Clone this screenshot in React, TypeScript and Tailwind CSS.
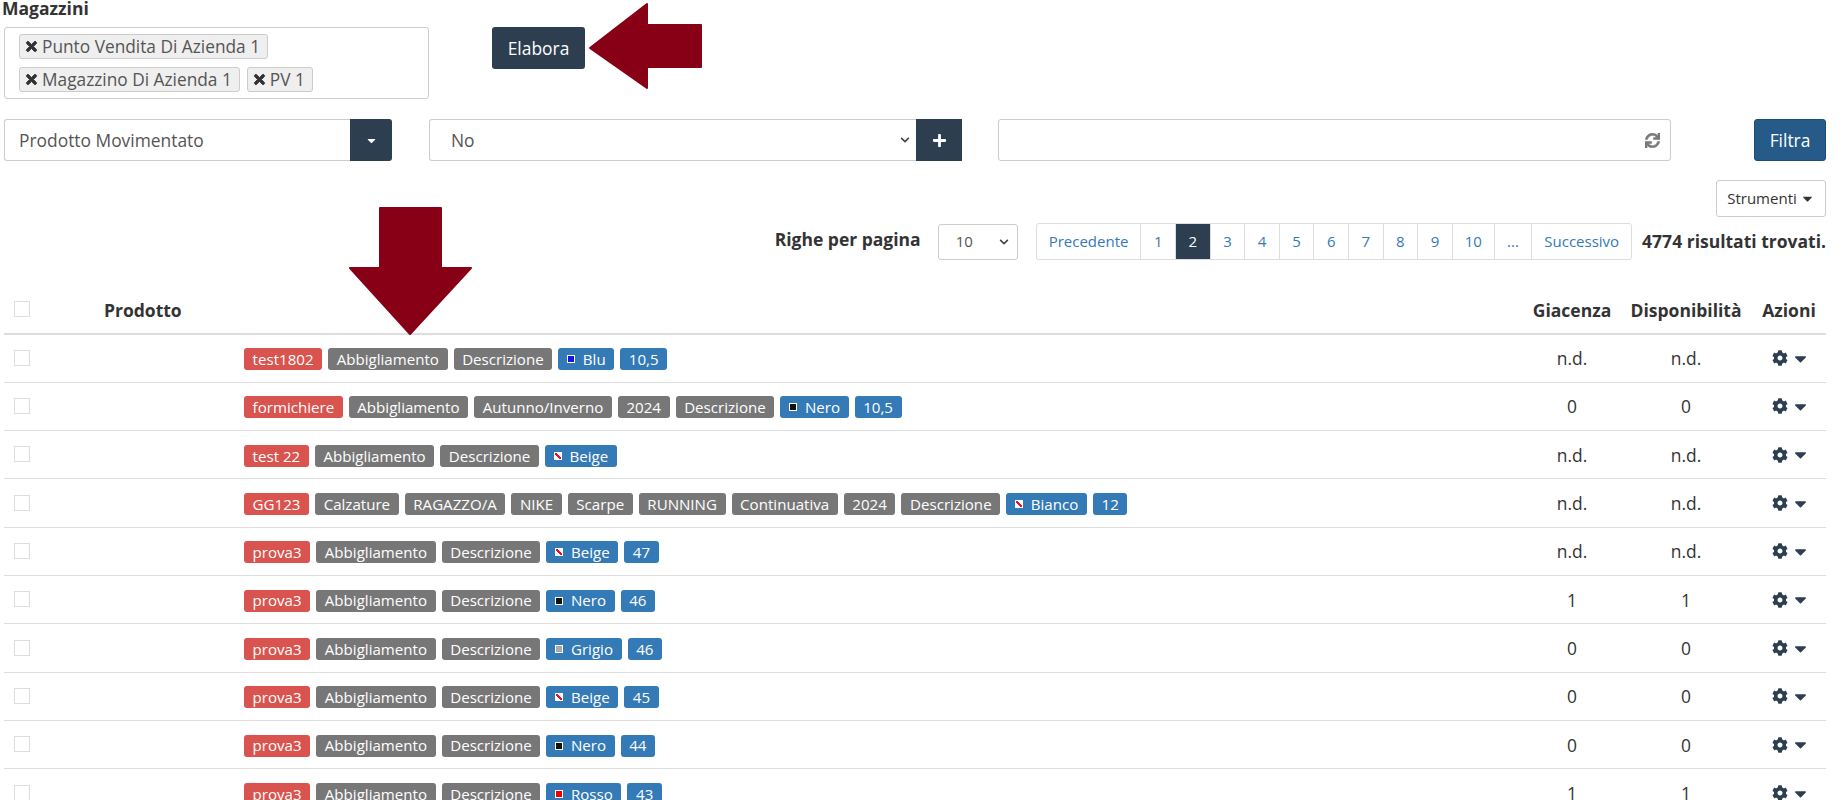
import React, { FC } from 'react';
import { FaTimes, FaCaretDown, FaPlus, FaSync, FaCog, FaChevronDown } from 'react-icons/fa';

interface IRow {
  code: string;
  tags: string[];
  color: string;
  swatch: string;
  size?: string;
  stock: string;
  available: string;
}

const rows: IRow[] = [
  { code: 'test1802', tags: ['Abbigliamento', 'Descrizione'], color: 'Blu', swatch: 'bg-[#1414e6]', size: '10,5', stock: 'n.d.', available: 'n.d.' },
  { code: 'formichiere', tags: ['Abbigliamento', 'Autunno/Inverno', '2024', 'Descrizione'], color: 'Nero', swatch: 'bg-[#111111]', size: '10,5', stock: '0', available: '0' },
  { code: 'test 22', tags: ['Abbigliamento', 'Descrizione'], color: 'Beige', swatch: 'striped', stock: 'n.d.', available: 'n.d.' },
  { code: 'GG123', tags: ['Calzature', 'RAGAZZO/A', 'NIKE', 'Scarpe', 'RUNNING', 'Continuativa', '2024', 'Descrizione'], color: 'Bianco', swatch: 'striped', size: '12', stock: 'n.d.', available: 'n.d.' },
  { code: 'prova3', tags: ['Abbigliamento', 'Descrizione'], color: 'Beige', swatch: 'striped', size: '47', stock: 'n.d.', available: 'n.d.' },
  { code: 'prova3', tags: ['Abbigliamento', 'Descrizione'], color: 'Nero', swatch: 'bg-[#111111]', size: '46', stock: '1', available: '1' },
  { code: 'prova3', tags: ['Abbigliamento', 'Descrizione'], color: 'Grigio', swatch: 'bg-[#aaaaaa]', size: '46', stock: '0', available: '0' },
  { code: 'prova3', tags: ['Abbigliamento', 'Descrizione'], color: 'Beige', swatch: 'striped', size: '45', stock: '0', available: '0' },
  { code: 'prova3', tags: ['Abbigliamento', 'Descrizione'], color: 'Nero', swatch: 'bg-[#111111]', size: '44', stock: '0', available: '0' },
  { code: 'prova3', tags: ['Abbigliamento', 'Descrizione'], color: 'Rosso', swatch: 'bg-[#ee0000]', size: '43', stock: '1', available: '1' },
];

const pages = ['1', '2', '3', '4', '5', '6', '7', '8', '9', '10', '...'];

const Chip: FC<{ label: string }> = ({ label }) => (
  <span className="inline-flex h-[25px] items-center gap-[3px] rounded-[3px] border border-[#cccccc] bg-[#efefef] pl-[4px] pr-[7px] text-[17.3px] text-[#555555]">
    <FaTimes className="text-[15px] text-[#333333]" stroke="currentColor" strokeWidth={30} />
    {label}
  </span>
);

const Badge: FC<{ className: string; children: React.ReactNode }> = ({ className, children }) => (
  <span className={`inline-flex h-[22px] items-center whitespace-nowrap rounded-[3px] px-[8.6px] text-[15.1px] text-white ${className}`}>
    {children}
  </span>
);

const Swatch: FC<{ swatch: string }> = ({ swatch }) => (
  <span className={`mr-[8px] h-[8px] w-[8px] border border-white ${swatch === 'striped' ? 'bg-[linear-gradient(45deg,#ffffff_35%,#e8112d_35%,#e8112d_60%,#ffffff_60%)]' : swatch}`} />
);

const Checkbox: FC = () => <span className="block h-[16px] w-[16px] border border-[#dddddd] bg-white" />;

const Arrow: FC<{ className: string; points: string; width: number; height: number }> = ({ className, points, width, height }) => (
  <svg className={`absolute ${className}`} width={width} height={height} viewBox={`0 0 ${width} ${height}`}>
    <polygon points={points} fill="#880015" stroke="#880015" strokeWidth="2" strokeLinejoin="round" />
  </svg>
);

const App: FC = () => {
  return (
    <div className="relative h-[800px] overflow-hidden bg-white pl-[4px] pr-[21px] font-['Open_Sans',sans-serif] text-[17.4px] text-[#333333]">
      {/* magazzini */}
      <div className="-ml-[2px] h-[17px] text-[17.5px] leading-[17px] font-bold">Magazzini</div>
      <div className="mt-[10px] flex items-start">
        <div className="flex h-[72px] w-[425px] flex-wrap content-start gap-x-[6px] gap-y-[8px] rounded-[3px] border border-[#cccccc] px-[14px] pt-[6px]">
          <Chip label="Punto Vendita Di Azienda 1" />
          <div className="flex w-full gap-[7px]">
            <Chip label="Magazzino Di Azienda 1" />
            <Chip label="PV 1" />
          </div>
        </div>
        <button className="ml-[63px] h-[42px] w-[93px] rounded-[3px] bg-[#2c3e50] text-[17.4px] text-white">Elabora</button>
      </div>

      {/* filtri */}
      <div className="mt-[20px] flex h-[42px] items-stretch">
        <div className="flex w-[388px]">
          <div className="flex flex-1 items-center rounded-l-[3px] border border-r-0 border-[#cccccc] pl-[14px] text-[#555555]">Prodotto Movimentato</div>
          <div className="flex w-[42px] items-center justify-center rounded-r-[3px] bg-[#2c3e50] text-white">
            <FaCaretDown className="text-[13px]" />
          </div>
        </div>
        <div className="ml-[37px] flex w-[533px]">
          <div className="flex flex-1 items-center justify-between rounded-l-[3px] border border-r-0 border-[#cccccc] pl-[21px] pr-[6px] text-[#555555]">
            No
            <FaChevronDown className="text-[10px] text-[#444444]" />
          </div>
          <div className="flex w-[46px] items-center justify-center bg-[#2c3e50] text-white">
            <FaPlus className="text-[15px]" />
          </div>
        </div>
        <div className="ml-[36px] flex w-[673px] items-center justify-end rounded-[3px] border border-[#cccccc] pr-[10px] text-[#777777]">
          <FaSync className="text-[15px]" stroke="currentColor" strokeWidth={20} />
        </div>
        <button className="ml-auto w-[72px] rounded-[3px] border border-[#204d74] bg-[#265a88] text-[17.4px] text-white">Filtra</button>
      </div>

      {/* strumenti */}
      <div className="mt-[19px] flex justify-end">
        <button className="flex h-[37px] w-[110px] items-center justify-center gap-[3px] rounded-[3px] border border-[#cccccc] text-[15px]">
          Strumenti
          <FaCaretDown className="text-[15px]" />
        </button>
      </div>

      {/* paginazione */}
      <div className="mt-[6px] flex h-[37px] items-center justify-end">
        <span className="-mt-[4px] text-[17.5px] font-bold">Righe per pagina</span>
        <div className="ml-[17px] flex h-[36px] w-[80px] items-center justify-between rounded-[3px] border border-[#cccccc] pl-[17px] pr-[8px] text-[15px] text-[#555555]">
          10
          <FaChevronDown className="text-[10px] text-[#444444]" />
        </div>
        <div className="ml-[18px] flex h-[37px] rounded-[3px] border border-[#dddddd] text-[15px] text-[#337ab7]">
          <span className="flex items-center px-[12px]">Precedente</span>
          {pages.map((page) => (
            <span
              key={page}
              className={`flex items-center justify-center border-l border-[#dddddd] ${page === '10' ? 'w-[42px]' : page === '...' ? 'w-[37.5px]' : 'w-[34.6px]'} ${page === '2' ? 'bg-[#2c3e50] text-white' : ''}`}>
              {page}
            </span>
          ))}
          <span className="flex items-center border-l border-[#dddddd] px-[12px]">Successivo</span>
        </div>
        <span className="ml-[10px] text-[17.5px] font-bold">4774 risultati trovati.</span>
      </div>

      {/* prodotti */}
      <table className="mt-[21px] w-[1822px] table-fixed border-collapse">
        <colgroup>
          <col className="w-[100px]" />
          <col className="w-[140px]" />
          <col />
          <col className="w-[96px]" />
          <col className="w-[132px]" />
          <col className="w-[74px]" />
        </colgroup>
        <thead>
          <tr className="h-[53px] border-b-2 border-[#dddddd] text-[17.5px] font-bold">
            <th className="pl-[10px] pt-[3px] text-left align-middle"><Checkbox /></th>
            <th colSpan={2} className="pt-[7px] text-left align-middle">Prodotto</th>
            <th className="whitespace-nowrap pt-[7px] text-center align-middle">Giacenza</th>
            <th className="whitespace-nowrap pt-[7px] text-center align-middle">Disponibilità</th>
            <th className="whitespace-nowrap pt-[7px] text-center align-middle">Azioni</th>
          </tr>
        </thead>
        <tbody>
          {rows.map((row, index) => (
            <tr key={index} className="h-[48.33px] border-b border-[#dddddd]">
              <td className="pb-[1px] pl-[10px] align-middle"><Checkbox /></td>
              <td />
              <td className="pt-[2px] align-middle">
                <div className="flex gap-[6px]">
                  <Badge className="bg-[#d9534f]">{row.code}</Badge>
                  {row.tags.map((tag, tagIndex) => (
                    <Badge key={tagIndex} className="bg-[#777777]">{tag}</Badge>
                  ))}
                  <Badge className="bg-[#337ab7]">
                    <Swatch swatch={row.swatch} />
                    {row.color}
                  </Badge>
                  {row.size ? <Badge className="bg-[#337ab7]">{row.size}</Badge> : null}
                </div>
              </td>
              <td className="text-center align-middle">{row.stock}</td>
              <td className="text-center align-middle">{row.available}</td>
              <td className="align-middle">
                <div className="flex items-center justify-center gap-[3px] pl-[4px] text-[#2c3e50]">
                  <FaCog className="text-[16px]" />
                  <FaCaretDown className="text-[19px]" />
                </div>
              </td>
            </tr>
          ))}
        </tbody>
      </table>

      {/* frecce */}
      <Arrow className="left-[589px] top-[3px]" width={115} height={86} points="1,45 58,1 58,22 112,22 112,64 58,64 58,85" />
      <Arrow className="left-[348px] top-[207px]" width={125} height={130} points="32,1 93,1 93,61 123,61 62,127 2,61 32,61" />
    </div>
  );
};

export default App;
